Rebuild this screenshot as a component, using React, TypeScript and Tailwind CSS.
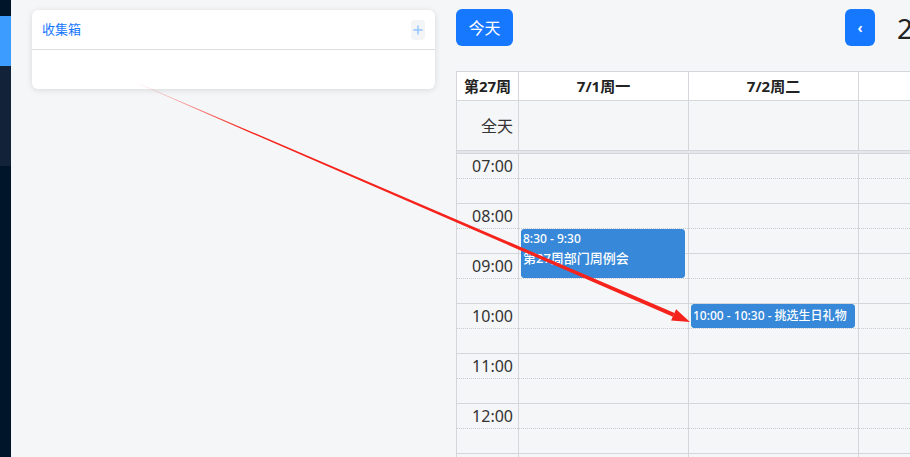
import { Plus } from "lucide-react";

const hours = ["07:00", "08:00", "09:00", "10:00", "11:00", "12:00", "13:00"];
const days = ["7/1周一", "7/2周二", "7/3周三"];

export default function App() {
  return (
    <div className="relative flex h-[457px] w-[910px] overflow-hidden bg-[#f5f6f8] font-['Noto_Sans','Noto_Sans_CJK_SC',sans-serif] text-[#222]">
      <Sidebar />

      <div className="flex min-w-0 flex-1 gap-[21px] pl-[21px]">
        <InboxCard />
        <Calendar />
      </div>

      <Arrow />
    </div>
  );
}

function Sidebar() {
  return (
    <div className="flex w-[11px] shrink-0 flex-col">
      <div className="h-[16px] bg-[#001529]" />
      <div className="h-[50px] bg-[#3c9cff]" />
      <div className="h-[100px] bg-[#112239]" />
      <div className="flex-1 bg-[#001529]" />
    </div>
  );
}

function InboxCard() {
  return (
    <div className="mt-[10px] h-[79px] w-[403px] shrink-0 rounded-md bg-white shadow-[0_1px_6px_rgba(0,0,0,0.12)]">
      <div className="flex h-[40px] items-center justify-between border-b border-[#dcdde0] pl-[10px] pr-[10px]">
        <span className="text-[13px] text-[#1677ff]">收集箱</span>
        <button className="flex h-[20px] w-[14px] items-center justify-center rounded bg-[#f3f4f6] text-[#91c3ff]">
          <Plus size={16} strokeWidth={2.4} />
        </button>
      </div>
    </div>
  );
}

function Calendar() {
  return (
    <div className="w-[700px] shrink-0">
      <div className="mt-[9px] flex h-[37px] items-center">
        <button className="h-[37px] w-[57px] rounded-md bg-[#1677ff] text-[16px] text-white">今天</button>
        <button className="ml-[332px] flex h-[37px] w-[30px] items-center justify-center rounded-md bg-[#1677ff] text-[14px] font-bold text-white">‹</button>
        <span className="ml-[22px] whitespace-nowrap text-[28px] text-[#222]">2024年7月1日 – 7日</span>
      </div>

      <div className="mt-[25px] border-l border-t border-[#d3d6db]">
        <div className="grid grid-cols-[62px_170px_170px_170px] bg-white">
          <div className="flex h-[29px] items-center justify-center border-b border-r border-[#d3d6db] text-[15px] font-bold">第27周</div>
          {days.map((d) => (
            <div key={d} className="flex h-[29px] items-center justify-center border-b border-r border-[#d3d6db] text-[15px] font-bold">{d}</div>
          ))}
        </div>
        <div className="grid grid-cols-[62px_170px_170px_170px]">
          <div className="flex h-[50px] items-center justify-end border-b border-r border-[#d3d6db] pr-[5px] text-[16px] text-[#333]">全天</div>
          {days.map((d) => (
            <div key={d} className="h-[50px] border-b border-r border-[#d3d6db]" />
          ))}
        </div>
        <div className="h-[3px] border-b border-[#d3d6db] bg-[#e4e6ea]" />

        <div className="relative grid grid-cols-[62px_170px_170px_170px]">
          <div>
            {hours.map((h) => (
              <div key={h} className="border-r border-[#d3d6db]">
                <div className="flex h-[25px] items-center justify-end border-b border-dotted border-[#c8cbd0] pr-[5px] text-[16px] text-[#333]">{h}</div>
                <div className="h-[25px] border-b border-[#d3d6db]" />
              </div>
            ))}
          </div>
          {days.map((d, i) => (
            <div key={d} className="relative">
              {hours.map((h) => (
                <div key={h} className="border-r border-[#d3d6db]">
                  <div className="h-[25px] border-b border-dotted border-[#c8cbd0]" />
                  <div className="h-[25px] border-b border-[#d3d6db]" />
                </div>
              ))}
              {i === 0 && (
                <div className="absolute left-[2px] top-[75px] h-[49px] w-[164px] rounded-[3px] border border-[#3788d8] bg-[#3788d8] px-[1px] font-medium text-white">
                  <div className="mt-[2px] text-[12px] leading-[14px]">8:30 - 9:30</div>
                  <div className="mt-[4px] text-[13px] leading-[16px]">第27周部门周例会</div>
                </div>
              )}
              {i === 1 && (
                <div className="absolute left-[2px] top-[150px] flex h-[24px] w-[164px] items-center rounded-[3px] border border-[#3788d8] bg-[#3788d8] px-[1px] text-[12px] font-medium text-white">
                  10:00 - 10:30 - 挑选生日礼物
                </div>
              )}
            </div>
          ))}
        </div>
      </div>
    </div>
  );
}

function Arrow() {
  return (
    <svg className="pointer-events-none absolute left-0 top-0" width="910" height="457" viewBox="0 0 910 457">
      <defs>
        <linearGradient id="arrowFade" gradientUnits="userSpaceOnUse" x1="137" y1="83" x2="690" y2="322">
          <stop offset="0" stopColor="#f5231b" stopOpacity="0.05" />
          <stop offset="0.2" stopColor="#f5231b" stopOpacity="1" />
          <stop offset="1" stopColor="#f5231b" stopOpacity="1" />
        </linearGradient>
      </defs>
      <polygon points="136.9,83.3 137.1,82.7 674.5,312.9 672.9,316.8" fill="url(#arrowFade)" />
      <polygon points="690,322 671.1,320.6 676.1,309.2" fill="#f5231b" />
    </svg>
  );
}
